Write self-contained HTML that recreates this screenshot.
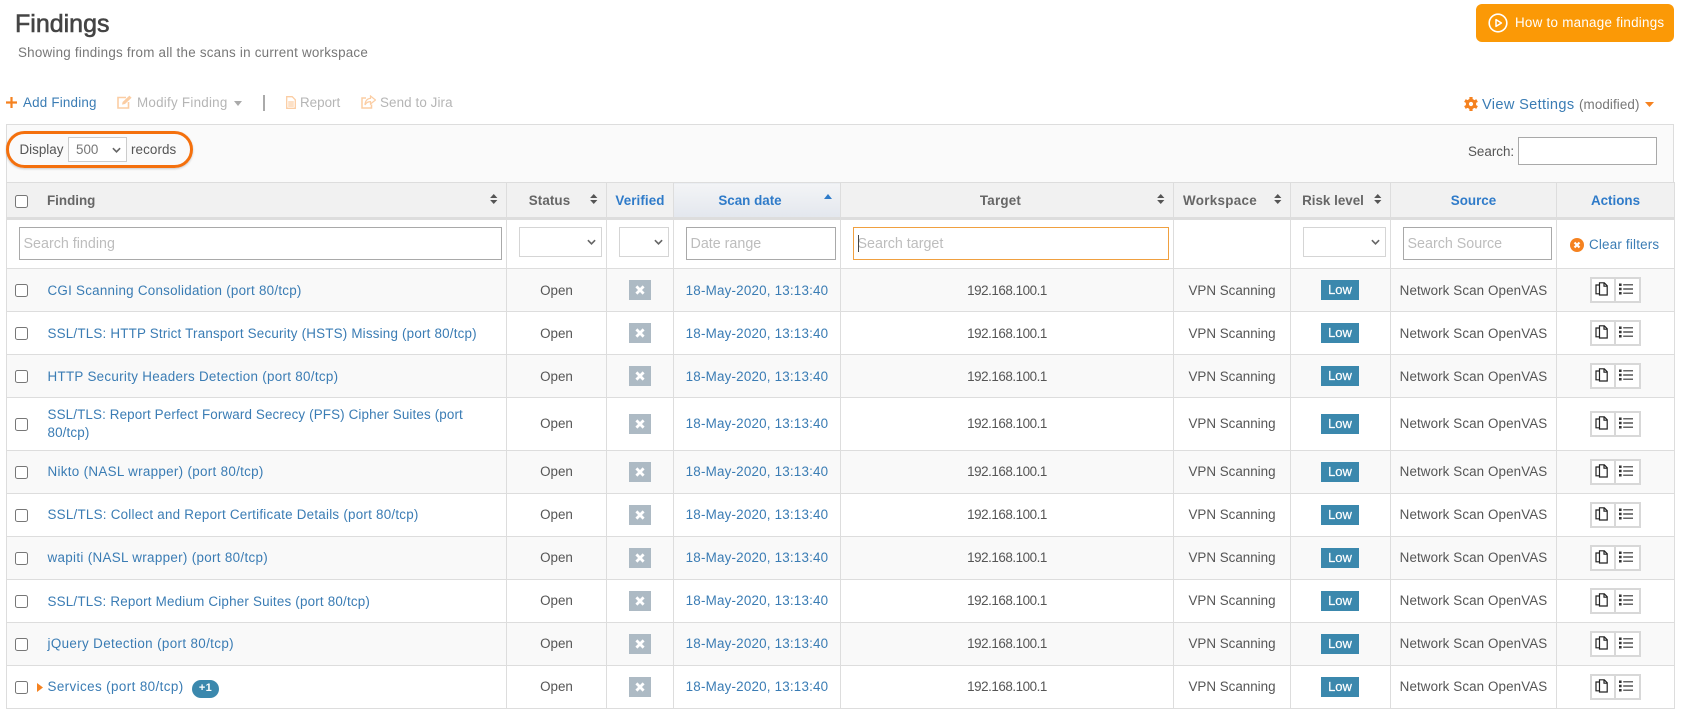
<!DOCTYPE html>
<html lang="en"><head><meta charset="utf-8"><title>Findings</title>
<style>
*{box-sizing:border-box}
html,body{margin:0;padding:0;width:1683px;height:710px;overflow:hidden;background:#fff}
body{font-family:"Liberation Sans",sans-serif;font-size:13.4px;color:#555;position:relative}
.a{position:absolute;white-space:nowrap;line-height:18px}
a{color:#3a7cb4;text-decoration:none}
svg{display:block;position:absolute}
h1{position:absolute;left:15px;top:9px;margin:0;font-size:25px;line-height:30px;font-weight:400;color:#444;-webkit-text-stroke:.6px #444}
.muted{color:#b5b5b5}
.box{position:absolute;left:6px;top:124px;width:1668px;height:59px;background:#fafafa;border:1px solid #ddd}
.pill{position:absolute;left:6px;top:131px;width:187px;height:37px;border:3px solid #f4700d;border-radius:19px;box-shadow:0 1px 2px rgba(0,0,0,.2)}
table{position:absolute;left:6px;top:182px;width:1668px;table-layout:fixed;border-collapse:collapse;font-size:13.4px}
th,td{border:1px solid #ddd;text-align:center;padding:0;vertical-align:middle}
th{height:36px;background:#f1f1f1;color:#666;border-bottom:3px solid #ddd;font-weight:700;padding-top:1px}
th.b{color:#2f7bc9}
th.sort{background:linear-gradient(#f3f4f6,#e3e7ee);color:#2f7bc9;padding-right:14px}
tr.f td{height:50px;background:#fff}
tr.r td{height:43px;background:#fff;position:relative}
tr.r.o td{background:#f9f9f9}
tr.r.t td{height:52.6px}
td.l{text-align:left;padding-left:40.5px;line-height:18px}
td.l a{display:block;white-space:nowrap}
tr.u td.l a{position:relative;top:1px}
.d{color:#3a7cb4;letter-spacing:.2px}
.ip{letter-spacing:-.45px}
.ns{letter-spacing:.1px}
.x{display:inline-block;width:22px;height:20px;background:#adbac4;vertical-align:middle;position:relative}
td.k{padding-right:1px}
.low{display:inline-block;width:38px;height:20px;line-height:19px;background:#3b88ad;color:#fff;font-size:13px;font-weight:400;-webkit-text-stroke:.2px #fff;vertical-align:middle}
.cb{position:absolute;left:8px;top:15px;width:13px;height:13px;border:1px solid #777;border-radius:2.5px;background:#fff}
.ab{position:absolute;top:8px;left:33px;width:51px;height:26px;border:2px solid #d8d8d8;background:#fff}
.ab:after{content:"";position:absolute;left:22px;top:-2px;bottom:-2px;width:2px;background:#d8d8d8}
.in{position:absolute;top:227px;height:33px;border:1.5px solid #a9a9a9;background:#fff;padding:0 3.5px;font:14.3px "Liberation Sans",sans-serif;color:#555;outline:0;border-radius:0}
.in::placeholder{color:#bdbdbd;opacity:1}
.sel{position:absolute;top:227px;height:30px;border:1.5px solid #d5d5d5;background:#fff}
.plus1{position:absolute;left:185px;top:14px;width:27px;height:18px;border-radius:9px;background:#3b88ad;color:#fff;font-size:11px;font-weight:700;line-height:17px;text-align:center}
</style></head><body>
<svg width="0" height="0" style="position:absolute"><defs>
<symbol id="sud" viewBox="0 0 8 11"><path d="M4 0 8 4.4H0Z M4 11 0 6.6H8Z" fill="#555"/></symbol>
<symbol id="chev" viewBox="0 0 10 6"><path d="M1 1 5 5 9 1" fill="none" stroke="#666" stroke-width="1.8"/></symbol>
<symbol id="cross" viewBox="0 0 22 20"><path d="M7.4 6.4 14.6 13.6M14.6 6.4 7.4 13.6" stroke="#fff" stroke-width="2.8" fill="none"/></symbol>
<symbol id="copy" viewBox="0 0 13 14"><path d="M4.5 3H1V11.8H4.5M4.5 .8V13H12.2V3.8L9.3 .8ZM9 .8V4.2H12.2" fill="none" stroke="#222" stroke-width="1.2"/></symbol>
<symbol id="list" viewBox="0 0 14 12"><path d="M0 .5H2.6V3H0ZM0 4.8H2.6V7.2H0ZM0 9H2.6V11.5H0Z" fill="#333"/><path d="M4.2 1.8H14M4.2 6H14M4.2 10.2H14" stroke="#333" stroke-width="1.2"/></symbol>
</defs></svg>

<h1>Findings</h1>
<div class="a" style="left:18px;top:44px;color:#777;letter-spacing:.23px">Showing findings from all the scans in current workspace</div>

<div style="position:absolute;left:1476px;top:4px;width:198px;height:38px;background:#fb9906;border-radius:6px"></div>
<svg style="left:1488px;top:13px" width="20" height="20" viewBox="0 0 20 20"><circle cx="10" cy="10" r="8.8" fill="none" stroke="#fff" stroke-width="1.6"/><path d="M8 6.6 13.4 10 8 13.4Z" fill="none" stroke="#fff" stroke-width="1.5" stroke-linejoin="round"/></svg>
<div class="a" style="left:1515px;top:14px;color:#fff;letter-spacing:.26px">How to manage findings</div>

<svg style="left:6px;top:97px" width="11" height="11" viewBox="0 0 11 11"><path d="M5.5 0V11M0 5.5H11" stroke="#f58220" stroke-width="2.2"/></svg>
<div class="a" style="left:23px;top:94px;letter-spacing:.2px"><a href="#">Add Finding</a></div>
<svg style="left:117px;top:95px" width="15" height="14" viewBox="0 0 15 14" fill="none"><path d="M9 2.5H1V13H11.5V7" stroke="#fbcda3" stroke-width="1.6"/><path d="M5 9.6 5.6 7 12.4 .6 14.6 2.8 8 9Z" fill="#fbcda3"/></svg>
<div class="a muted" style="left:137px;top:94px;letter-spacing:.25px">Modify Finding</div>
<svg style="left:234px;top:101px" width="8" height="5" viewBox="0 0 8 5"><path d="M0 0H8L4 5Z" fill="#aaa"/></svg>
<div style="position:absolute;left:263px;top:95px;width:1.5px;height:16px;background:#aaa"></div>
<svg style="left:286px;top:96px" width="10" height="13" viewBox="0 0 10 13" fill="none" stroke="#fbcda3"><path d="M.7.7H6.2L9.3 3.8V12.3H.7ZM2.2 6H7.8M2.2 8H7.8M2.2 10H7.8" stroke-width="1.3"/></svg>
<div class="a muted" style="left:300px;top:94px">Report</div>
<svg style="left:361px;top:95px" width="15" height="14" viewBox="0 0 15 14" fill="none"><path d="M5 3H1V13H10.5V9.5" stroke="#fbcda3" stroke-width="1.5"/><path d="M9.5 1 14.5 5 9.5 9V6.6C7 6.6 5.2 7.5 4 10 4 6.3 6 3.6 9.5 3.4Z" stroke="#fbcda3" stroke-width="1.2"/></svg>
<div class="a muted" style="left:380px;top:94px;letter-spacing:.1px">Send to Jira</div>

<svg style="left:1464px;top:97px" width="14" height="14" viewBox="0 0 14 14"><g fill="#f58220"><circle cx="7" cy="7" r="5.2"/><rect x="5.4" y="0" width="3.2" height="14"/><rect x="5.4" y="0" width="3.2" height="14" transform="rotate(60 7 7)"/><rect x="5.4" y="0" width="3.2" height="14" transform="rotate(120 7 7)"/></g><circle cx="7" cy="7" r="2.1" fill="#fff"/></svg>
<div class="a" style="left:1482px;top:96px;font-size:14.6px;letter-spacing:.33px"><a href="#">View Settings</a></div>
<div class="a" style="left:1579px;top:95.5px;color:#777;letter-spacing:.1px">(modified)</div>
<svg style="left:1645px;top:102px" width="9" height="5" viewBox="0 0 9 5"><path d="M0 0H9L4.5 5Z" fill="#f58220"/></svg>

<div class="box"></div>
<div class="a" style="left:19.5px;top:140.5px">Display</div>
<select class="sel" style="left:68px;top:137px;width:59px;height:25px;border-color:#ccc;appearance:none;-webkit-appearance:none;font:13.4px 'Liberation Sans',sans-serif;color:#777;padding-left:7px;border-radius:0"><option>500</option></select>
<svg style="left:112px;top:147px" width="9" height="6"><use href="#chev"/></svg>
<div class="a" style="left:131px;top:140.5px;letter-spacing:.1px">records</div>
<div class="pill"></div>
<div class="a" style="left:1468px;top:143px">Search:</div>
<input class="in" aria-label="Search" style="left:1518px;top:137px;width:139px;height:28px">

<table>
<colgroup><col style="width:500px"><col style="width:100px"><col style="width:67px"><col style="width:167px"><col style="width:333px"><col style="width:117px"><col style="width:100px"><col style="width:166px"><col style="width:118px"></colgroup>
<thead>
<tr><th style="text-align:left;padding-left:40px">Finding</th><th style="padding-right:14px;letter-spacing:.1px">Status</th><th class="b" style="letter-spacing:.1px">Verified</th><th class="sort">Scan date</th><th style="padding-right:13px;letter-spacing:.2px">Target</th><th style="padding-right:24px;letter-spacing:.3px">Workspace</th><th style="padding-right:15px">Risk level</th><th class="b">Source</th><th class="b">Actions</th></tr>
<tr class="f"><td></td><td></td><td></td><td></td><td></td><td></td><td></td><td></td>
<td style="text-align:left;padding:1px 0 0 32px;white-space:nowrap;letter-spacing:.2px"><a href="#">Clear filters</a></td></tr>
</thead>
<tbody>
<tr class="r o u"><td class="l" style="letter-spacing:.25px"><span class="cb"></span><a href="#">CGI Scanning Consolidation (port 80/tcp)</a></td><td>Open</td><td><span class="x"><svg width="22" height="20"><use href="#cross"/></svg></span></td><td class="d">18-May-2020, 13:13:40</td><td class="ip">192.168.100.1</td><td>VPN Scanning</td><td class="k"><span class="low">Low</span></td><td class="ns">Network Scan OpenVAS</td><td><span class="ab"><svg style="left:3px;top:3px" width="13" height="14"><use href="#copy"/></svg><svg style="left:26.5px;top:4px" width="14" height="12"><use href="#list"/></svg></span></td></tr>
<tr class="r u"><td class="l" style="letter-spacing:.2px"><span class="cb"></span><a href="#">SSL/TLS: HTTP Strict Transport Security (HSTS) Missing (port 80/tcp)</a></td><td>Open</td><td><span class="x"><svg width="22" height="20"><use href="#cross"/></svg></span></td><td class="d">18-May-2020, 13:13:40</td><td class="ip">192.168.100.1</td><td>VPN Scanning</td><td class="k"><span class="low">Low</span></td><td class="ns">Network Scan OpenVAS</td><td><span class="ab"><svg style="left:3px;top:3px" width="13" height="14"><use href="#copy"/></svg><svg style="left:26.5px;top:4px" width="14" height="12"><use href="#list"/></svg></span></td></tr>
<tr class="r o u"><td class="l" style="letter-spacing:.3px"><span class="cb"></span><a href="#">HTTP Security Headers Detection (port 80/tcp)</a></td><td>Open</td><td><span class="x"><svg width="22" height="20"><use href="#cross"/></svg></span></td><td class="d">18-May-2020, 13:13:40</td><td class="ip">192.168.100.1</td><td>VPN Scanning</td><td class="k"><span class="low">Low</span></td><td class="ns">Network Scan OpenVAS</td><td><span class="ab"><svg style="left:3px;top:3px" width="13" height="14"><use href="#copy"/></svg><svg style="left:26.5px;top:4px" width="14" height="12"><use href="#list"/></svg></span></td></tr>
<tr class="r t"><td class="l" style="letter-spacing:.14px"><span class="cb" style="top:20px"></span><a href="#">SSL/TLS: Report Perfect Forward Secrecy (PFS) Cipher Suites (port<br>80/tcp)</a></td><td>Open</td><td><span class="x"><svg width="22" height="20"><use href="#cross"/></svg></span></td><td class="d">18-May-2020, 13:13:40</td><td class="ip">192.168.100.1</td><td>VPN Scanning</td><td class="k"><span class="low">Low</span></td><td class="ns">Network Scan OpenVAS</td><td><span class="ab" style="top:13px"><svg style="left:3px;top:3px" width="13" height="14"><use href="#copy"/></svg><svg style="left:26.5px;top:4px" width="14" height="12"><use href="#list"/></svg></span></td></tr>
<tr class="r o"><td class="l" style="letter-spacing:.31px"><span class="cb"></span><a href="#">Nikto (NASL wrapper) (port 80/tcp)</a></td><td>Open</td><td><span class="x"><svg width="22" height="20"><use href="#cross"/></svg></span></td><td class="d">18-May-2020, 13:13:40</td><td class="ip">192.168.100.1</td><td>VPN Scanning</td><td class="k"><span class="low">Low</span></td><td class="ns">Network Scan OpenVAS</td><td><span class="ab"><svg style="left:3px;top:3px" width="13" height="14"><use href="#copy"/></svg><svg style="left:26.5px;top:4px" width="14" height="12"><use href="#list"/></svg></span></td></tr>
<tr class="r"><td class="l" style="letter-spacing:.24px"><span class="cb"></span><a href="#">SSL/TLS: Collect and Report Certificate Details (port 80/tcp)</a></td><td>Open</td><td><span class="x"><svg width="22" height="20"><use href="#cross"/></svg></span></td><td class="d">18-May-2020, 13:13:40</td><td class="ip">192.168.100.1</td><td>VPN Scanning</td><td class="k"><span class="low">Low</span></td><td class="ns">Network Scan OpenVAS</td><td><span class="ab"><svg style="left:3px;top:3px" width="13" height="14"><use href="#copy"/></svg><svg style="left:26.5px;top:4px" width="14" height="12"><use href="#list"/></svg></span></td></tr>
<tr class="r o"><td class="l" style="letter-spacing:.32px"><span class="cb"></span><a href="#">wapiti (NASL wrapper) (port 80/tcp)</a></td><td>Open</td><td><span class="x"><svg width="22" height="20"><use href="#cross"/></svg></span></td><td class="d">18-May-2020, 13:13:40</td><td class="ip">192.168.100.1</td><td>VPN Scanning</td><td class="k"><span class="low">Low</span></td><td class="ns">Network Scan OpenVAS</td><td><span class="ab"><svg style="left:3px;top:3px" width="13" height="14"><use href="#copy"/></svg><svg style="left:26.5px;top:4px" width="14" height="12"><use href="#list"/></svg></span></td></tr>
<tr class="r u"><td class="l" style="letter-spacing:.2px"><span class="cb"></span><a href="#">SSL/TLS: Report Medium Cipher Suites (port 80/tcp)</a></td><td>Open</td><td><span class="x"><svg width="22" height="20"><use href="#cross"/></svg></span></td><td class="d">18-May-2020, 13:13:40</td><td class="ip">192.168.100.1</td><td>VPN Scanning</td><td class="k"><span class="low">Low</span></td><td class="ns">Network Scan OpenVAS</td><td><span class="ab"><svg style="left:3px;top:3px" width="13" height="14"><use href="#copy"/></svg><svg style="left:26.5px;top:4px" width="14" height="12"><use href="#list"/></svg></span></td></tr>
<tr class="r o"><td class="l" style="letter-spacing:.36px"><span class="cb"></span><a href="#">jQuery Detection (port 80/tcp)</a></td><td>Open</td><td><span class="x"><svg width="22" height="20"><use href="#cross"/></svg></span></td><td class="d">18-May-2020, 13:13:40</td><td class="ip">192.168.100.1</td><td>VPN Scanning</td><td class="k"><span class="low">Low</span></td><td class="ns">Network Scan OpenVAS</td><td><span class="ab"><svg style="left:3px;top:3px" width="13" height="14"><use href="#copy"/></svg><svg style="left:26.5px;top:4px" width="14" height="12"><use href="#list"/></svg></span></td></tr>
<tr class="r"><td class="l" style="letter-spacing:.4px"><span class="cb"></span><svg style="left:30px;top:17px" width="6" height="9" viewBox="0 0 6 9"><path d="M0 0 6 4.5 0 9Z" fill="#f58220"/></svg><a href="#">Services (port 80/tcp)</a><span class="plus1">+1</span></td><td>Open</td><td><span class="x"><svg width="22" height="20"><use href="#cross"/></svg></span></td><td class="d">18-May-2020, 13:13:40</td><td class="ip">192.168.100.1</td><td>VPN Scanning</td><td class="k"><span class="low">Low</span></td><td class="ns">Network Scan OpenVAS</td><td><span class="ab"><svg style="left:3px;top:3px" width="13" height="14"><use href="#copy"/></svg><svg style="left:26.5px;top:4px" width="14" height="12"><use href="#list"/></svg></span></td></tr>
</tbody></table>

<span style="position:absolute;left:15px;top:195px;width:13px;height:13px;border:1px solid #777;border-radius:2.5px;background:#fff"></span>
<svg style="left:490px;top:194px" width="7.5" height="10"><use href="#sud"/></svg>
<svg style="left:590px;top:194px" width="7.5" height="10"><use href="#sud"/></svg>
<svg style="left:824px;top:194px" width="8" height="5" viewBox="0 0 8 5"><path d="M4 0 8 5H0Z" fill="#2f7bc9"/></svg>
<svg style="left:1157px;top:194px" width="7.5" height="10"><use href="#sud"/></svg>
<svg style="left:1274px;top:194px" width="7.5" height="10"><use href="#sud"/></svg>
<svg style="left:1374px;top:194px" width="7.5" height="10"><use href="#sud"/></svg>

<input class="in" placeholder="Search finding" style="left:19px;width:483px">
<div class="sel" style="left:519px;width:83px"></div><svg style="left:587px;top:239px" width="9" height="6"><use href="#chev"/></svg>
<div class="sel" style="left:619px;width:50px"></div><svg style="left:654px;top:239px" width="9" height="6"><use href="#chev"/></svg>
<input class="in" placeholder="Date range" style="left:686px;width:150px">
<input class="in" placeholder="Search target" style="left:853px;width:316px;border:1.5px solid #f0a040">
<div style="position:absolute;left:858px;top:235px;width:1px;height:17px;background:#444"></div>
<div class="sel" style="left:1303px;width:83px"></div><svg style="left:1371px;top:239px" width="9" height="6"><use href="#chev"/></svg>
<input class="in" placeholder="Search Source" style="left:1403px;width:149px">
<svg style="left:1570px;top:237.5px" width="14" height="14" viewBox="0 0 13 13"><circle cx="6.5" cy="6.5" r="6.5" fill="#f58220"/><path d="M4.2 4.2 8.8 8.8M8.8 4.2 4.2 8.8" stroke="#fff" stroke-width="2"/></svg>
</body></html>
